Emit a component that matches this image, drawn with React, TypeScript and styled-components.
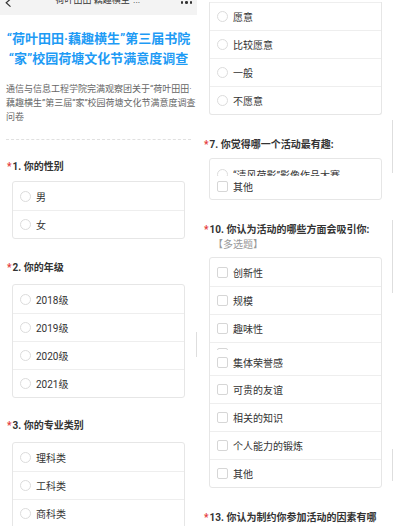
import styled, { createGlobalStyle } from 'styled-components';

const GlobalStyle = createGlobalStyle`
  html, body {
    margin: 0;
    padding: 0;
    background: #fff;
  }
  body {
    font-family: Roboto, "Noto Sans CJK SC", sans-serif;
    overflow: hidden;
  }
`;

const Screen = styled.div`
  display: flex;
  width: 394px;
  height: 526px;
  overflow: hidden;
`;

const Panel = styled.div`
  position: relative;
  flex: none;
  width: 197px;
  height: 526px;
  display: flex;
  flex-direction: column;
  overflow: hidden;
`;

const NavBar = styled.div`
  flex: none;
  height: 15px;
  background: #f3f3f3;
  display: flex;
  align-items: flex-start;
  justify-content: space-between;
  padding: 0 5px 0 5px;
  overflow: hidden;
`;

const NavTitle = styled.div`
  font-size: 9px;
  line-height: 10px;
  margin-top: -5px;
  color: #333;
  white-space: nowrap;
`;

const Dots = styled.div`
  display: flex;
  gap: 2px;
  margin-top: 1px;
  span {
    width: 2.5px;
    height: 2.5px;
    border-radius: 50%;
    background: #333;
  }
`;

const SurveyTitle = styled.h1`
  margin: 14px 0 0;
  font-size: 13px;
  line-height: 20px;
  font-weight: 700;
  color: #1e9bf5;
  text-align: center;
  white-space: nowrap;
`;

const Description = styled.p`
  margin: 13px 4px 0 6px;
  font-size: 9px;
  line-height: 14px;
  color: #666;
  white-space: nowrap;
`;

const Divider = styled.div`
  margin: 15px 6px 0;
  border-top: 1px dashed #e0e0e0;
`;

const Question = styled.section<{ $top: number }>`
  margin-top: ${(p) => p.$top}px;
  display: flex;
  flex-direction: column;
`;

const QTitle = styled.div`
  padding: 0 14px 0 7px;
  font-size: 10px;
  line-height: 14px;
  font-weight: 700;
  color: #333;
`;

const Star = styled.span`
  color: #e4393c;
  margin-right: 1px;
`;

const Hint = styled.div`
  padding-left: 16px;
  font-size: 10px;
  line-height: 15px;
  font-weight: 400;
  color: #999;
`;

const Card = styled.div<{ $gap: number; $cut?: boolean }>`
  margin: ${(p) => p.$gap}px 12px 0;
  border: 1px solid #e6e6e6;
  border-top: ${(p) => (p.$cut ? 'none' : '1px solid #e6e6e6')};
  border-radius: ${(p) => (p.$cut ? '0 0 3px 3px' : '3px')};
  display: flex;
  flex-direction: column;
`;

const Row = styled.div<{ $h?: number; $line?: boolean; $pb?: number }>`
  box-sizing: border-box;
  height: ${(p) => p.$h ?? 28}px;
  flex: none;
  display: flex;
  align-items: center;
  gap: 5px;
  padding: 0 0 ${(p) => p.$pb ?? 0}px 7px;
  border-top: ${(p) => (p.$line ? '1px solid #eeeeee' : 'none')};
  font-size: 10px;
  color: #333;
  white-space: nowrap;
`;

const Clip = styled.div<{ $h: number }>`
  height: ${(p) => p.$h}px;
  overflow: hidden;
  flex: none;
`;

const Radio = styled.span`
  flex: none;
  width: 9px;
  height: 9px;
  border: 1px solid #dcdcdc;
  border-radius: 50%;
`;

const Check = styled.span`
  flex: none;
  width: 9px;
  height: 9px;
  border: 1px solid #d6d6d6;
  border-radius: 2px;
`;

const ScrollMark = styled.div<{ $top: number; $len: number; $right: number }>`
  position: absolute;
  right: ${(p) => p.$right}px;
  top: ${(p) => p.$top}px;
  width: 1.5px;
  height: ${(p) => p.$len}px;
  background: #dedede;
`;

type Kind = 'radio' | 'check';

const Options = ({ items, kind, cut }: { items: string[]; kind: Kind; cut?: boolean }) => (
  <>
    {items.map((t, i) => (
      <Row key={t} $line={i > 0 || cut}>
        {kind === 'radio' ? <Radio /> : <Check />}
        {t}
      </Row>
    ))}
  </>
);

const Title = ({ n, text }: { n: number; text: string }) => (
  <QTitle>
    <Star>*</Star>
    {n}. {text}
  </QTitle>
);

const App = () => (
  <>
    <GlobalStyle />
    <Screen>
      <Panel>
        <NavBar>
          <svg width="7" height="8" viewBox="0 0 7 8" style={{ marginTop: -1 }}>
            <path d="M5.5 0 L1.2 3.8 L5.5 7.6" fill="none" stroke="#333" strokeWidth="1.2" />
          </svg>
          <NavTitle>“荷叶田田·藕趣横生”...</NavTitle>
          <Dots>
            <span />
            <span />
            <span />
          </Dots>
        </NavBar>

        <SurveyTitle>
          “荷叶田田·藕趣横生”第三届书院
          <br />
          “家”校园荷塘文化节满意度调查
        </SurveyTitle>

        <Description>
          通信与信息工程学院完满观察团关于“荷叶田田·
          <br />
          藕趣横生”第三届“家”校园荷塘文化节满意度调查
          <br />
          问卷
        </Description>

        <Divider />

        <Question $top={20}>
          <Title n={1} text="你的性别" />
          <Card $gap={7}>
            <Options kind="radio" items={['男', '女']} />
          </Card>
        </Question>

        <Question $top={22}>
          <Title n={2} text="你的年级" />
          <Card $gap={9}>
            <Options kind="radio" items={['2018级', '2019级', '2020级', '2021级']} />
          </Card>
        </Question>

        <Question $top={21}>
          <Title n={3} text="你的专业类别" />
          <Card $gap={9}>
            <Options kind="radio" items={['理科类', '工科类', '商科类', '文科类']} />
          </Card>
        </Question>

        <ScrollMark $top={332} $len={25} $right={0} />
      </Panel>

      <Panel>
        <Card $gap={2} $cut>
          <Options kind="radio" cut items={['愿意', '比较愿意', '一般', '不愿意']} />
        </Card>

        <Question $top={23}>
          <Title n={7} text="你觉得哪一个活动最有趣:" />
          <Card $gap={6}>
            <Clip $h={17}>
              <Row $h={30}>
                <Radio />
                “清风荷影”影像作品大赛
              </Row>
            </Clip>
            <Row $h={23} $pb={2}>
              <Check />
              其他
            </Row>
          </Card>
        </Question>

        <Question $top={23}>
          <Title n={10} text="你认为活动的哪些方面会吸引你:" />
          <Hint>【多选题】</Hint>
          <Card $gap={5}>
            <Options kind="check" items={['创新性', '规模', '趣味性']} />
            <Row $h={8} $line style={{ alignItems: 'flex-end', overflow: 'hidden' }}>
              <Check style={{ marginBottom: -9 }} />
            </Row>
            <Row $h={25}>
              <Check />
              集体荣誉感
            </Row>
            <Options kind="check" cut items={['可贵的友谊', '相关的知识', '个人能力的锻炼', '其他']} />
          </Card>
        </Question>

        <Question $top={23}>
          <Title n={13} text="你认为制约你参加活动的因素有哪些:" />
        </Question>

        <ScrollMark $top={120} $len={53} $right={1} />
        <ScrollMark $top={220} $len={73} $right={1} />
        <ScrollMark $top={449} $len={32} $right={1} />
      </Panel>
    </Screen>
  </>
);

export default App;
